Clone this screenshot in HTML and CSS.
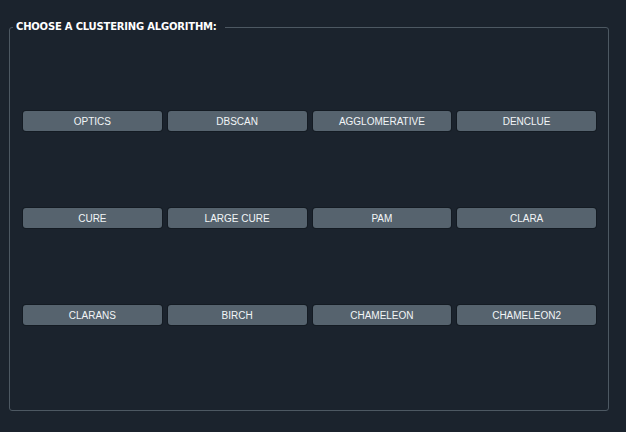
FILE: index.html
```html
<!DOCTYPE html>
<html>
<head>
<meta charset="utf-8">
<link rel="stylesheet" href="styles.css">
</head>
<body>
<div class="group">
  <div class="legend">CHOOSE A CLUSTERING ALGORITHM:</div>
  <div class="grid">
    <button class="btn">OPTICS</button>
    <button class="btn">DBSCAN</button>
    <button class="btn">AGGLOMERATIVE</button>
    <button class="btn">DENCLUE</button>
    <button class="btn">CURE</button>
    <button class="btn">LARGE CURE</button>
    <button class="btn">PAM</button>
    <button class="btn">CLARA</button>
    <button class="btn">CLARANS</button>
    <button class="btn">BIRCH</button>
    <button class="btn">CHAMELEON</button>
    <button class="btn">CHAMELEON2</button>
  </div>
</div>
</body>
</html>
```
FILE: styles.css
```css
html, body {
  margin: 0;
  padding: 0;
  background: #1b232d;
  width: 626px;
  height: 432px;
  overflow: hidden;
}
body {
  padding: 27px 17px 0 9px;
  box-sizing: border-box;
  font-family: "Liberation Sans", Arial, sans-serif;
}
.group {
  position: relative;
  width: 600px;
  height: 384px;
  box-sizing: border-box;
  border: 1px solid #4d5862;
  border-radius: 3px;
  padding: 83px 12px 0 13px;
}
.legend {
  position: absolute;
  left: 3px;
  top: -7px;
  padding: 0 8px 0 3px;
  background: #1b232d;
  color: #ffffff;
  font-family: "DejaVu Sans", Verdana, sans-serif;
  font-weight: bold;
  font-size: 10px;
  line-height: 12px;
  letter-spacing: -0.2px;
}
.grid {
  display: grid;
  grid-template-columns: repeat(4, 1fr);
  column-gap: 6px;
  row-gap: 77px;
}
.btn {
  height: 20px;
  margin: 0;
  padding: 1px 0 0 0;
  border: none;
  border-radius: 3px;
  background: #56636e;
  box-shadow: 0 0 0 1px #141b23;
  color: #f2f5f7;
  font-family: "Liberation Sans", Arial, sans-serif;
  font-size: 10px;
  line-height: 19px;
  text-align: center;
}
```
